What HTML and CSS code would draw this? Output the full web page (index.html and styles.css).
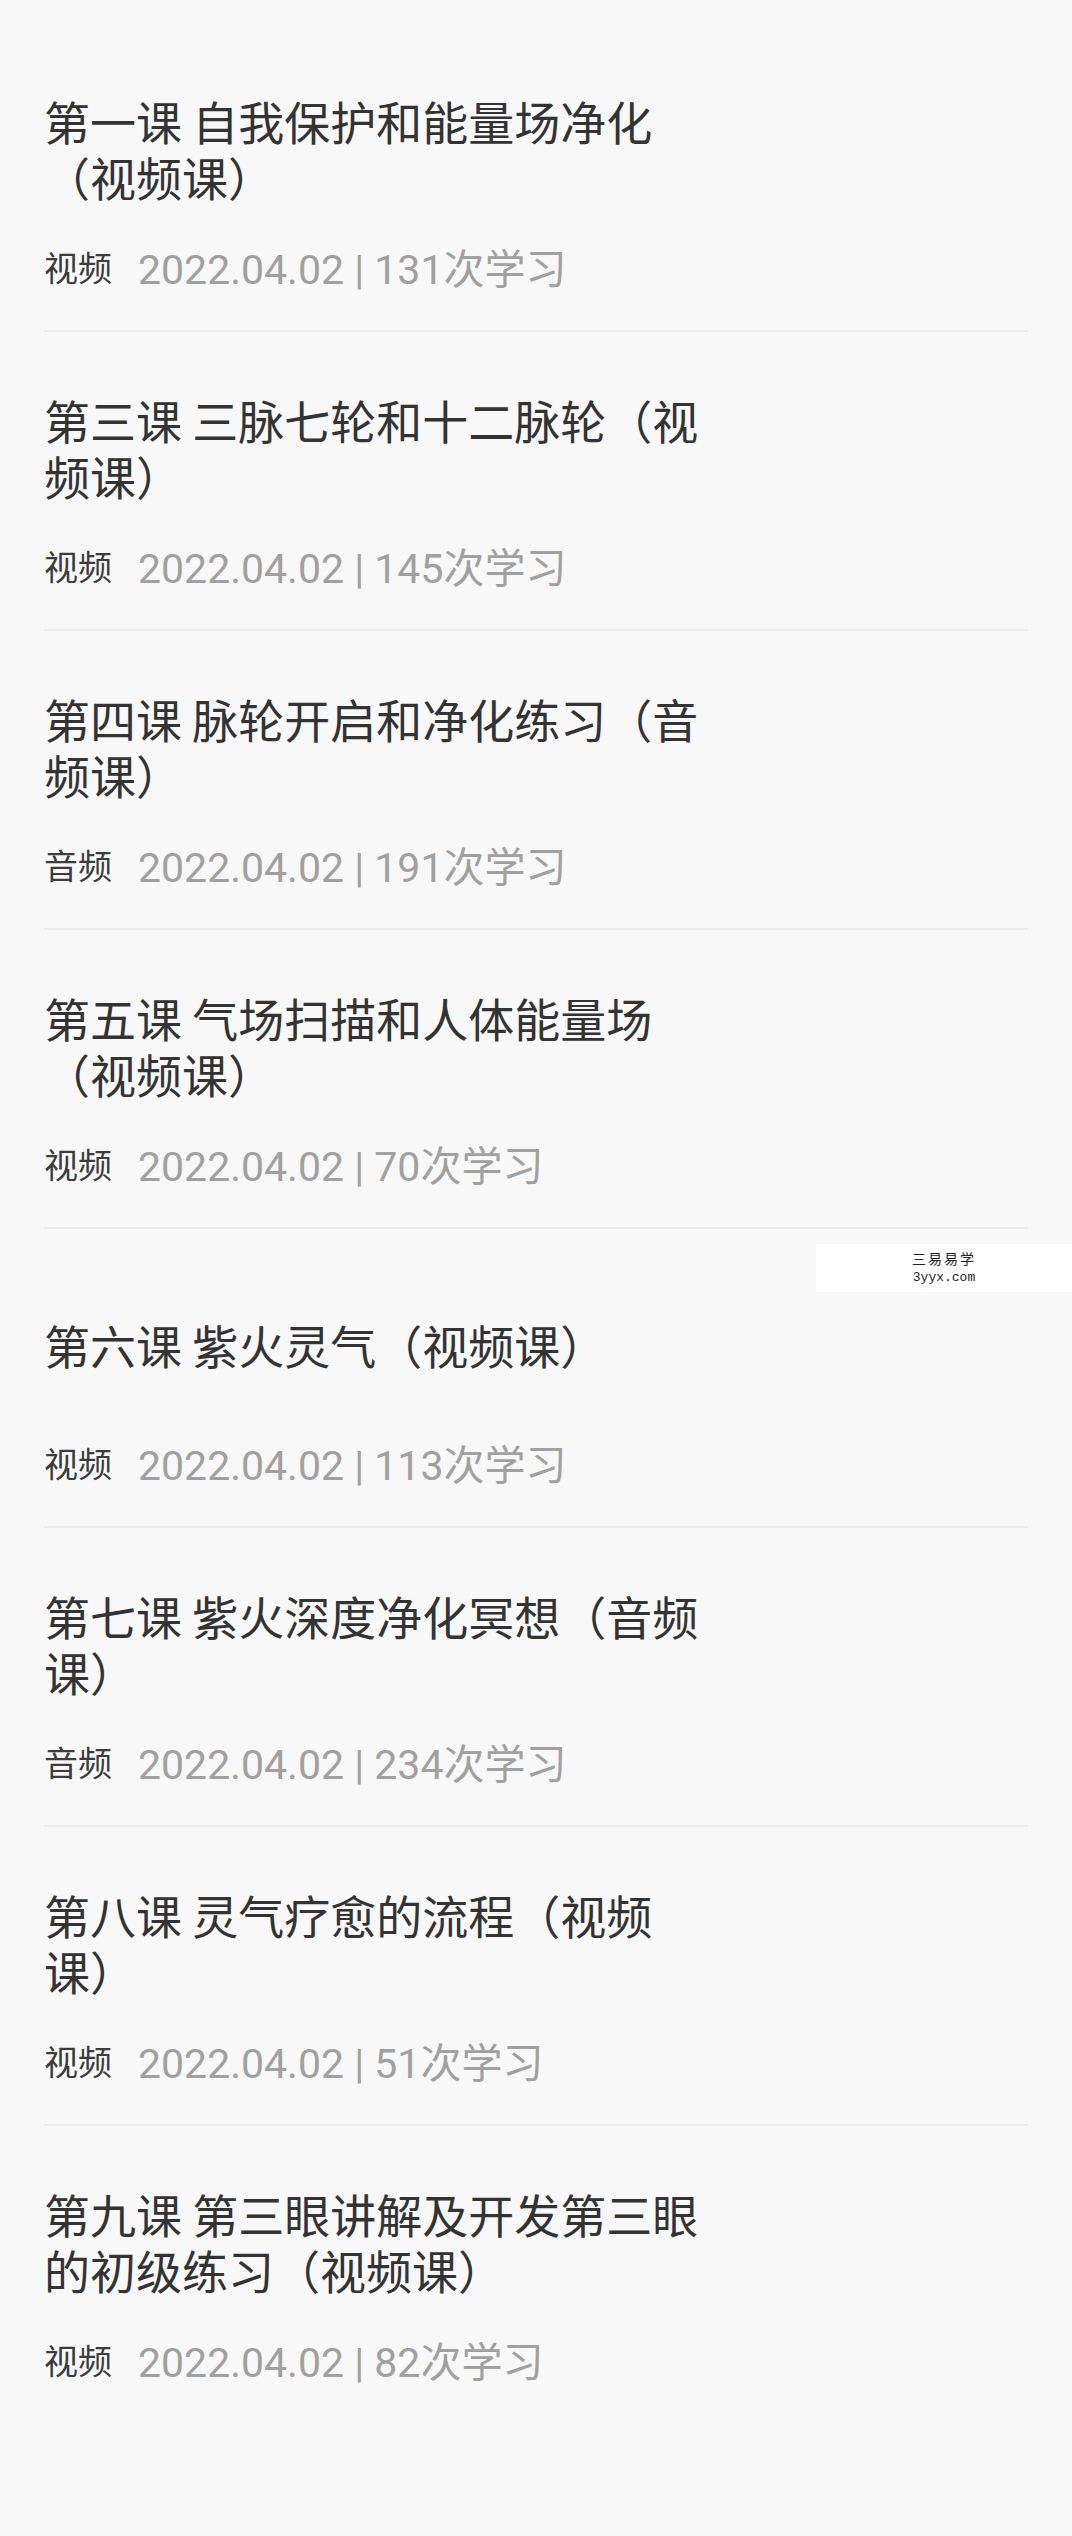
FILE: index.html
```html
<!DOCTYPE html>
<html lang="zh-CN">
<head>
    <meta charset="UTF-8">
    <meta name="viewport" content="width=device-width, initial-scale=1.0">
    <title>课程目录</title>
    <link rel="stylesheet" href="styles.css">
</head>
<body>
    <ul class="lesson-list">
        <li class="lesson">
            <div class="lesson-title"><span>第一课 自我保护和能量场净化（视频课）</span></div>
            <div class="lesson-meta"><span class="lesson-type">视频</span><span class="lesson-info">2022.04.02 | 131次学习</span></div>
        </li>
        <li class="lesson">
            <div class="lesson-title"><span>第三课 三脉七轮和十二脉轮（视频课）</span></div>
            <div class="lesson-meta"><span class="lesson-type">视频</span><span class="lesson-info">2022.04.02 | 145次学习</span></div>
        </li>
        <li class="lesson">
            <div class="lesson-title"><span>第四课 脉轮开启和净化练习（音频课）</span></div>
            <div class="lesson-meta"><span class="lesson-type">音频</span><span class="lesson-info">2022.04.02 | 191次学习</span></div>
        </li>
        <li class="lesson">
            <div class="lesson-title"><span>第五课 气场扫描和人体能量场（视频课）</span></div>
            <div class="lesson-meta"><span class="lesson-type">视频</span><span class="lesson-info">2022.04.02 | 70次学习</span></div>
        </li>
        <li class="lesson">
            <div class="lesson-title"><span>第六课 紫火灵气（视频课）</span></div>
            <div class="lesson-meta"><span class="lesson-type">视频</span><span class="lesson-info">2022.04.02 | 113次学习</span></div>
        </li>
        <li class="lesson">
            <div class="lesson-title"><span>第七课 紫火深度净化冥想（音频课）</span></div>
            <div class="lesson-meta"><span class="lesson-type">音频</span><span class="lesson-info">2022.04.02 | 234次学习</span></div>
        </li>
        <li class="lesson">
            <div class="lesson-title"><span>第八课 灵气疗愈的流程（视频课）</span></div>
            <div class="lesson-meta"><span class="lesson-type">视频</span><span class="lesson-info">2022.04.02 | 51次学习</span></div>
        </li>
        <li class="lesson">
            <div class="lesson-title"><span>第九课 第三眼讲解及开发第三眼的初级练习（视频课）</span></div>
            <div class="lesson-meta"><span class="lesson-type">视频</span><span class="lesson-info">2022.04.02 | 82次学习</span></div>
        </li>
    </ul>

    <div class="watermark">
        <div class="watermark-name">三易易学</div>
        <div class="watermark-url">3yyx.com</div>
    </div>
</body>
</html>
```

FILE: styles.css
```css
body {
    margin: 0;
    background: #f8f8f8;
    font-family: "Noto Sans CJK SC", sans-serif;
    position: relative;
    min-height: 2536px;
}

.lesson-list {
    list-style: none;
    margin: 0;
    padding: 33px 44px 0;
}

.lesson {
    padding: 59px 0 39px;
    border-bottom: 2px solid #ececec;
}

.lesson:last-child {
    border-bottom: none;
}

.lesson-title {
    height: 112px;
    display: flex;
    align-items: center;
}

.lesson-title span {
    max-width: 664px;
    font-size: 46px;
    line-height: 56px;
    color: #333;
}

.lesson-meta {
    margin-top: 37px;
    height: 50px;
    display: flex;
    align-items: center;
}

.lesson-type {
    font-size: 34px;
    color: #3c3c3c;
    margin-right: 26px;
}

.lesson-info {
    font-family: Roboto, "Noto Sans CJK SC", sans-serif;
    font-size: 41px;
    color: #a0a0a0;
}

.watermark {
    position: absolute;
    left: 816px;
    top: 1244px;
    width: 256px;
    height: 48px;
    background: #fff;
    text-align: center;
    color: #222;
}

.watermark-name {
    font-size: 14px;
    line-height: 20px;
    padding-top: 4px;
    letter-spacing: 2px;
}

.watermark-url {
    font-family: "Liberation Mono", monospace;
    font-size: 13px;
    line-height: 20px;
}
```
